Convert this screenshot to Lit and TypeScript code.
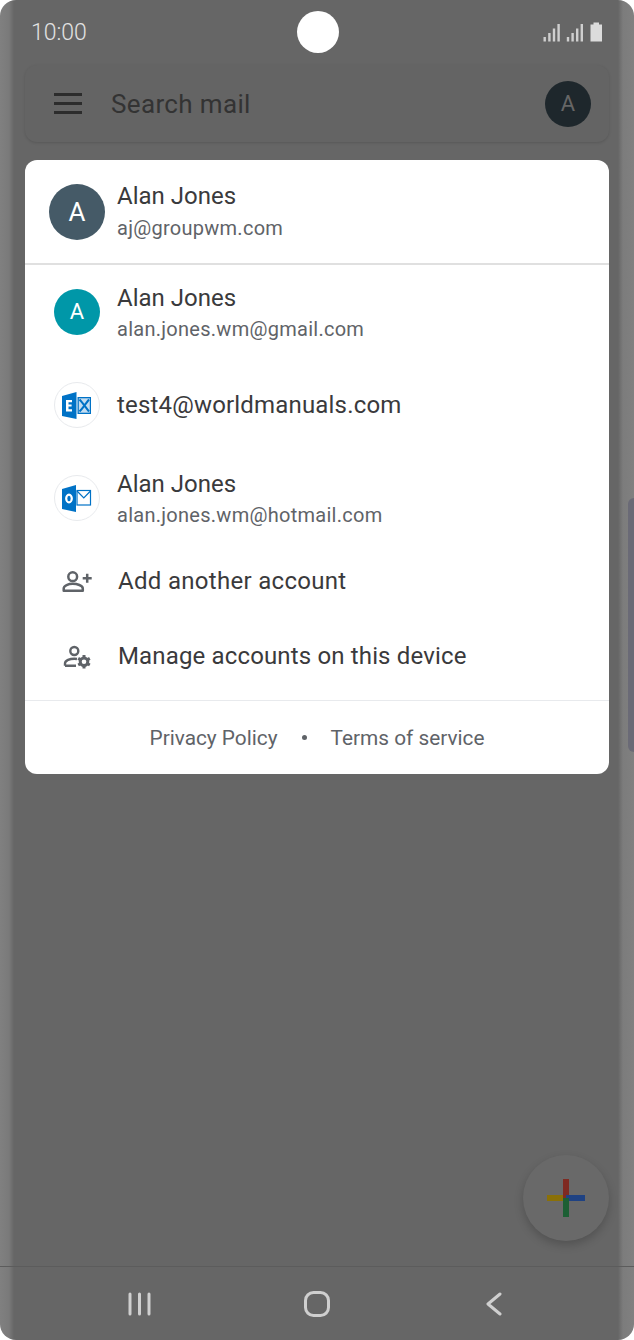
import { LitElement, html, css, svg } from "lit";
import { customElement } from "lit/decorators.js";

const exchangeIcon = svg`
  <svg width="30" height="30" viewBox="0 0 30 30">
    <path d="M0 6 L14.5 2 V29 L0 26 Z" fill="#0072c6"/>
    <rect x="15.5" y="7" width="13.5" height="17" fill="#0072c6"/>
    <rect x="16.8" y="8.3" width="11" height="14.4" fill="#c4ddf1"/>
    <path d="M17.5 9.5 C21 13 24 18 27 21.5 M27 9.5 C24 13 21 18 17.5 21.5" fill="none" stroke="#0072c6" stroke-width="2"/>
    <path d="M4 10 H10 V12.2 H6.5 V14.6 H9.6 V16.6 H6.5 V19.2 H10 V21.4 H4 Z" fill="#fff"/>
  </svg>`;

const outlookIcon = svg`
  <svg width="30" height="30" viewBox="0 0 30 30">
    <path d="M0 6 L14 2 V29 L0 26 Z" fill="#0072c6"/>
    <rect x="15" y="7.5" width="13.5" height="14.5" fill="#fff" stroke="#0072c6" stroke-width="1.2"/>
    <path d="M15 8 L21.8 15 L28.5 8" fill="none" stroke="#0072c6" stroke-width="1.2"/>
    <ellipse cx="7" cy="15.5" rx="2.8" ry="3.8" fill="none" stroke="#fff" stroke-width="2.2"/>
  </svg>`;

const addIcon = svg`
  <svg width="30" height="24" viewBox="0 0 30 24" fill="none" stroke="#5f6368" stroke-width="2.5">
    <circle cx="10.7" cy="7.7" r="4.4"/>
    <path d="M1.7 21.7 V19.4 C1.7 16.5 6.5 14.8 10.7 14.8 C15 14.8 20.8 16.5 20.8 19.4 V21.7 Z" stroke-linejoin="round"/>
    <path d="M20.7 9.3 H29.7 M25.2 4.8 V13.8"/>
  </svg>`;

const manageIcon = svg`
  <svg width="30" height="26" viewBox="0 0 30 26" fill="none" stroke="#5f6368" stroke-width="2.4">
    <circle cx="12.3" cy="8" r="4"/>
    <path d="M3 22.8 V20.6 C3 17.4 8 15.7 12.3 15.7 C13.2 15.7 14 15.8 15 16 M3 22.8 H14" stroke-linejoin="round"/>
    <circle cx="22" cy="18.7" r="3.8" stroke-width="3"/>
    <path d="M22 12 V14.4 M22 23 V25.4 M16.2 15.4 L18.3 16.6 M25.7 20.8 L27.8 22 M16.2 22 L18.3 20.8 M25.7 16.6 L27.8 15.4" stroke-width="3"/>
  </svg>`;

@customElement("app-root")
export class AppRoot extends LitElement {
  static styles = css`
    :host {
      display: block;
      width: 634px;
      height: 1340px;
      background: #fff;
      font-family: Roboto, "Liberation Sans", sans-serif;
    }

    .screen {
      position: relative;
      width: 634px;
      height: 1340px;
      box-sizing: border-box;
      padding: 0 25px;
      display: flex;
      flex-direction: column;
      overflow: hidden;
      border-radius: 16px;
      background:
        linear-gradient(90deg, #808080 0, #7a7a7a 9px, #666 14px, #666 618px, #7c7c7c 623px, #808080 634px);
    }

    .status {
      height: 65px;
      flex: none;
      display: flex;
      align-items: center;
      justify-content: space-between;
      padding: 0 6px 0 6px;
      color: #e2e2e2;
      font-size: 23px;
      font-weight: 300;
    }

    .camera {
      position: absolute;
      left: 297px;
      top: 11px;
      width: 42px;
      height: 42px;
      border-radius: 50%;
      background: #fff;
    }

    .signal {
      display: block;
      margin-top: -1px;
    }

    .search {
      height: 77px;
      flex: none;
      box-sizing: border-box;
      display: flex;
      align-items: center;
      padding: 0 18px 0 29px;
      background: #646464;
      border-radius: 12px;
      box-shadow: 0 1px 3px rgba(0, 0, 0, 0.14);
    }

    .menu {
      width: 28px;
      height: 21px;
      flex: none;
      margin-right: 29px;
      display: flex;
      flex-direction: column;
      justify-content: space-between;
    }

    .menu span {
      height: 3px;
      background: #2c2c2c;
    }

    .search-text {
      flex: 1;
      font-size: 26px;
      letter-spacing: 0.35px;
      color: #333;
    }

    .search-avatar {
      width: 46px;
      height: 46px;
      border-radius: 50%;
      background: #1e272c;
      color: #666;
      font-size: 22px;
      display: flex;
      align-items: center;
      justify-content: center;
    }

    .card {
      margin-top: 18px;
      height: 614px;
      flex: none;
      background: #fff;
      border-radius: 12px;
      display: flex;
      flex-direction: column;
      overflow: hidden;
    }

    .header {
      height: 105px;
      flex: none;
      box-sizing: border-box;
      display: flex;
      align-items: center;
      padding: 0 0 0 24px;
      gap: 12px;
      border-bottom: 2px solid #e0e0e0;
    }

    .header .avatar {
      width: 56px;
      height: 56px;
      background: #455a67;
      font-size: 26px;
    }

    .header .sub {
      margin-top: 2px;
    }

    .row {
      height: 93px;
      flex: none;
      display: flex;
      align-items: center;
      padding-left: 29px;
      gap: 17px;
    }

    .lines {
      padding-top: 4px;
    }

    .avatar {
      flex: none;
      width: 46px;
      height: 46px;
      border-radius: 50%;
      color: #fff;
      font-size: 22px;
      display: flex;
      align-items: center;
      justify-content: center;
      background: #0097a8;
    }

    .logo {
      background: #fff;
      border: 1px solid #e8eaed;
      box-sizing: border-box;
    }

    .name {
      font-size: 24px;
      line-height: 30px;
      font-weight: 450;
      color: #3a3a3c;
    }

    .name.email {
      letter-spacing: 0.18px;
    }

    .sub {
      font-size: 20px;
      line-height: 30px;
      letter-spacing: 0.27px;
      color: #5f6368;
      margin-top: 1px;
    }

    .action {
      height: 75px;
      flex: none;
      display: flex;
      align-items: center;
      padding-left: 37px;
      font-size: 24px;
      font-weight: 450;
      letter-spacing: 0.3px;
      color: #3a3a3c;
    }

    .action.long {
      letter-spacing: 0.15px;
    }

    .action svg {
      flex: none;
      margin-right: 26px;
    }

    .actions {
      margin-top: -1px;
    }

    .footer {
      margin-top: 7px;
      flex: 1;
      border-top: 1px solid #e8eaed;
      display: flex;
      align-items: center;
      justify-content: center;
      gap: 24px;
      font-size: 20.8px;
      color: #5f6368;
    }

    .dot {
      width: 5px;
      height: 5px;
      border-radius: 50%;
      background: #5f6368;
    }

    .scroll-edge {
      position: absolute;
      right: 0;
      top: 498px;
      width: 6px;
      height: 254px;
      border-radius: 6px 0 0 6px;
      background: #6a6a76;
    }

    .fab {
      position: absolute;
      left: 523px;
      top: 1155px;
      width: 86px;
      height: 86px;
      border-radius: 50%;
      background: #696969;
      box-shadow: 0 4px 10px rgba(0, 0, 0, 0.2);
      display: flex;
      align-items: center;
      justify-content: center;
    }

    .nav {
      margin: auto -25px 0;
      height: 74px;
      flex: none;
      box-sizing: border-box;
      border-top: 1px solid #5c5c5c;
      display: flex;
      align-items: center;
      justify-content: space-between;
      padding: 0 132px 0 128px;
    }

    .home {
      margin-right: 3px;
    }
  `;

  render() {
    return html`
      <div class="screen">
        <div class="status">
          <span>10:00</span>
          <svg class="signal" width="60" height="22" viewBox="0 0 60 22">
            <g fill="#cfcfcf">
              <rect x="0.5" y="16" width="2.4" height="4.5"/>
              <rect x="5.2" y="12" width="2.4" height="8.5"/>
              <rect x="9.8" y="7.5" width="2.4" height="13"/>
              <rect x="14.4" y="3" width="2.4" height="17.5"/>
              <rect x="23.8" y="16" width="2.4" height="4.5"/>
              <rect x="28.4" y="12" width="2.4" height="8.5"/>
              <rect x="33" y="7.5" width="2.4" height="13"/>
              <rect x="37.6" y="3" width="2.4" height="17.5"/>
            </g>
            <path d="M47.5 3.5 H50.5 V1.5 H56 V3.5 H59 V20.5 H47.5 Z" fill="#dcdcdc"/>
          </svg>
        </div>
        <div class="camera"></div>

        <div class="search">
          <div class="menu"><span></span><span></span><span></span></div>
          <div class="search-text">Search mail</div>
          <div class="search-avatar">A</div>
        </div>

        <div class="card">
          <div class="header">
            <div class="avatar">A</div>
            <div>
              <div class="name">Alan Jones</div>
              <div class="sub">aj@groupwm.com</div>
            </div>
          </div>
          <div class="row">
            <div class="avatar">A</div>
            <div class="lines">
              <div class="name">Alan Jones</div>
              <div class="sub">alan.jones.wm@gmail.com</div>
            </div>
          </div>
          <div class="row">
            <div class="avatar logo">${exchangeIcon}</div>
            <div class="name email">test4@worldmanuals.com</div>
          </div>
          <div class="row">
            <div class="avatar logo">${outlookIcon}</div>
            <div class="lines">
              <div class="name">Alan Jones</div>
              <div class="sub">alan.jones.wm@hotmail.com</div>
            </div>
          </div>
          <div class="actions">
            <div class="action">${addIcon}Add another account</div>
            <div class="action long">${manageIcon}Manage accounts on this device</div>
          </div>
          <div class="footer">
            <span>Privacy Policy</span>
            <span class="dot"></span>
            <span>Terms of service</span>
          </div>
        </div>

        <div class="scroll-edge"></div>

        <div class="fab">
          <svg width="38" height="38" viewBox="0 0 38 38">
            <rect x="0" y="16" width="19" height="6" fill="#8a7008"/>
            <rect x="16" y="0" width="6" height="19" fill="#7f2a22"/>
            <rect x="19" y="16" width="19" height="6" fill="#1f4283"/>
            <rect x="16" y="19" width="6" height="19" fill="#1c5f34"/>
          </svg>
        </div>

        <div class="nav">
          <svg width="23" height="24" viewBox="0 0 23 24" stroke="#cfcfcf" stroke-width="3" stroke-linecap="round">
            <path d="M2 2 V22 M11.5 2 V22 M21 2 V22"/>
          </svg>
          <svg class="home" width="26" height="26" viewBox="0 0 26 26" fill="none" stroke="#cfcfcf" stroke-width="3">
            <rect x="1.5" y="1.5" width="23" height="23" rx="8"/>
          </svg>
          <svg width="16" height="24" viewBox="0 0 16 24" fill="none" stroke="#cfcfcf" stroke-width="3" stroke-linecap="round" stroke-linejoin="round">
            <path d="M14 2 L2 12 L14 22"/>
          </svg>
        </div>
      </div>
    `;
  }
}
